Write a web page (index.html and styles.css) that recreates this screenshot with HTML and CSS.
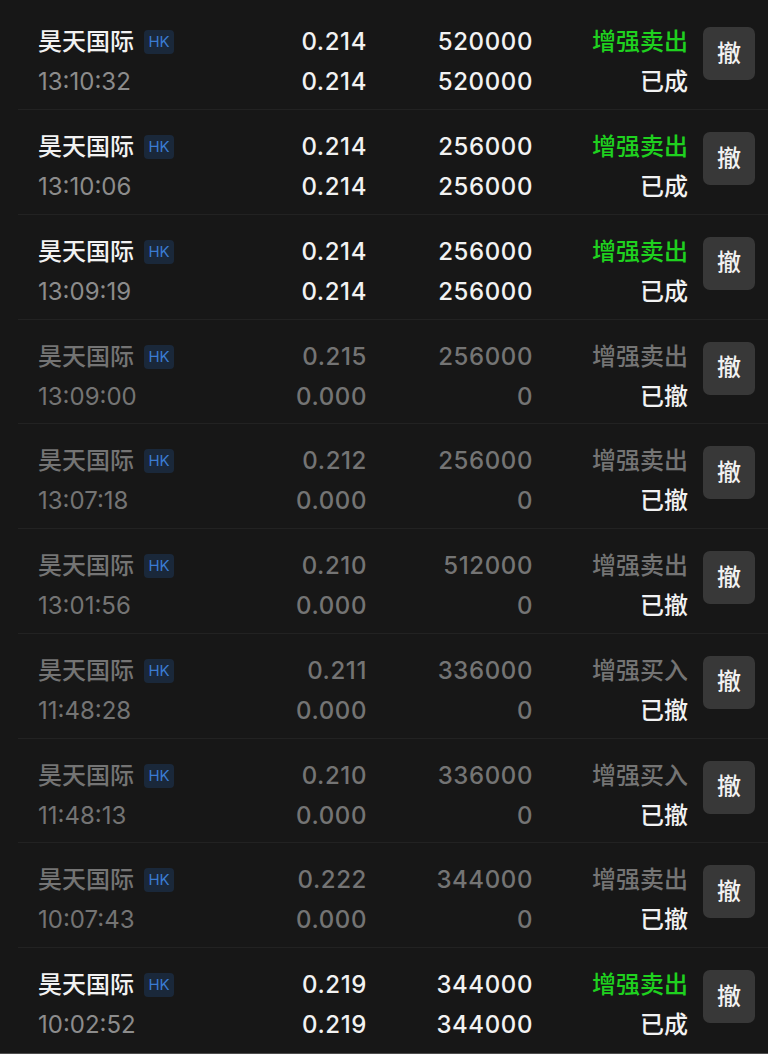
FILE: index.html
```html
<!DOCTYPE html>
<html lang="zh-CN">
<head>
<meta charset="utf-8">
<title>委托列表</title>
<link rel="stylesheet" href="styles.css">
</head>
<body>
<div class="list">
  <div class="row">
    <div class="c-left"><div class="name">昊天国际<span class="tag">HK</span></div><div class="time">13:10:32</div></div>
    <div class="c-num"><div>0.214</div><div>0.214</div></div>
    <div class="c-num"><div>520000</div><div>520000</div></div>
    <div class="c-status"><div class="green">增强卖出</div><div>已成</div></div>
    <div class="btn">撤</div>
  </div>
  <div class="row">
    <div class="c-left"><div class="name">昊天国际<span class="tag">HK</span></div><div class="time">13:10:06</div></div>
    <div class="c-num"><div>0.214</div><div>0.214</div></div>
    <div class="c-num"><div>256000</div><div>256000</div></div>
    <div class="c-status"><div class="green">增强卖出</div><div>已成</div></div>
    <div class="btn">撤</div>
  </div>
  <div class="row">
    <div class="c-left"><div class="name">昊天国际<span class="tag">HK</span></div><div class="time">13:09:19</div></div>
    <div class="c-num"><div>0.214</div><div>0.214</div></div>
    <div class="c-num"><div>256000</div><div>256000</div></div>
    <div class="c-status"><div class="green">增强卖出</div><div>已成</div></div>
    <div class="btn">撤</div>
  </div>
  <div class="row dim">
    <div class="c-left"><div class="name">昊天国际<span class="tag">HK</span></div><div class="time">13:09:00</div></div>
    <div class="c-num"><div>0.215</div><div>0.000</div></div>
    <div class="c-num"><div>256000</div><div>0</div></div>
    <div class="c-status"><div class="side">增强卖出</div><div>已撤</div></div>
    <div class="btn">撤</div>
  </div>
  <div class="row dim">
    <div class="c-left"><div class="name">昊天国际<span class="tag">HK</span></div><div class="time">13:07:18</div></div>
    <div class="c-num"><div>0.212</div><div>0.000</div></div>
    <div class="c-num"><div>256000</div><div>0</div></div>
    <div class="c-status"><div class="side">增强卖出</div><div>已撤</div></div>
    <div class="btn">撤</div>
  </div>
  <div class="row dim">
    <div class="c-left"><div class="name">昊天国际<span class="tag">HK</span></div><div class="time">13:01:56</div></div>
    <div class="c-num"><div>0.210</div><div>0.000</div></div>
    <div class="c-num"><div>512000</div><div>0</div></div>
    <div class="c-status"><div class="side">增强卖出</div><div>已撤</div></div>
    <div class="btn">撤</div>
  </div>
  <div class="row dim">
    <div class="c-left"><div class="name">昊天国际<span class="tag">HK</span></div><div class="time">11:48:28</div></div>
    <div class="c-num"><div>0.211</div><div>0.000</div></div>
    <div class="c-num"><div>336000</div><div>0</div></div>
    <div class="c-status"><div class="side">增强买入</div><div>已撤</div></div>
    <div class="btn">撤</div>
  </div>
  <div class="row dim">
    <div class="c-left"><div class="name">昊天国际<span class="tag">HK</span></div><div class="time">11:48:13</div></div>
    <div class="c-num"><div>0.210</div><div>0.000</div></div>
    <div class="c-num"><div>336000</div><div>0</div></div>
    <div class="c-status"><div class="side">增强买入</div><div>已撤</div></div>
    <div class="btn">撤</div>
  </div>
  <div class="row dim">
    <div class="c-left"><div class="name">昊天国际<span class="tag">HK</span></div><div class="time">10:07:43</div></div>
    <div class="c-num"><div>0.222</div><div>0.000</div></div>
    <div class="c-num"><div>344000</div><div>0</div></div>
    <div class="c-status"><div class="side">增强卖出</div><div>已撤</div></div>
    <div class="btn">撤</div>
  </div>
  <div class="row last">
    <div class="c-left"><div class="name">昊天国际<span class="tag">HK</span></div><div class="time">10:02:52</div></div>
    <div class="c-num"><div>0.219</div><div>0.219</div></div>
    <div class="c-num"><div>344000</div><div>344000</div></div>
    <div class="c-status"><div class="green">增强卖出</div><div>已成</div></div>
    <div class="btn">撤</div>
  </div>
</div>
<div class="footer-edge"></div>
</body>
</html>
```

FILE: styles.css
```css
html, body {
  margin: 0;
  padding: 0;
  background: #171717;
}
body {
  padding-top: 5.25px;
  font-family: Inter, "Noto Sans CJK SC", sans-serif;
  color: #f2f2f2;
  overflow: hidden;
  height: 1054px;
  box-sizing: border-box;
}
.list {
  margin-left: 18px;
}
.row {
  box-sizing: border-box;
  height: 104.75px;
  border-bottom: 1px solid #222222;
  padding: 17px 13px 0 20px;
  display: grid;
  grid-template-columns: 202px 127px 166px 155px 52px;
  align-items: start;
  font-size: 24px;
  line-height: 40px;
}
.row.last {
  border-bottom: none;
}
.c-left .name {
  display: flex;
  align-items: center;
  font-weight: 500;
  color: #f2f2f2;
}
.tag {
  display: inline-flex;
  align-items: center;
  justify-content: center;
  width: 30px;
  height: 24px;
  margin-left: 10px;
  border-radius: 4px;
  background: #1a283a;
  color: #3a7bd2;
  font-family: Inter, sans-serif;
  font-size: 15px;
  font-weight: 400;
  line-height: 24px;
}
.time {
  color: #8c8c8c;
  font-weight: 400;
}
.c-num {
  text-align: right;
  font-weight: 500;
  letter-spacing: 0.6px;
}
.c-status {
  text-align: right;
  font-weight: 500;
}
.green {
  color: #1fd11f;
}
.btn {
  margin-left: 15px;
  margin-top: 5px;
  width: 52px;
  height: 53px;
  border-radius: 7px;
  background: #383838;
  color: #f2f2f2;
  display: flex;
  align-items: center;
  justify-content: center;
  font-size: 24px;
  font-weight: 500;
  line-height: 1;
}
.row.dim .name,
.row.dim .time,
.row.dim .c-num,
.row.dim .side {
  color: #747474;
}
.row.dim .c-status div:last-child {
  color: #f2f2f2;
}
.footer-edge {
  height: 2px;
  background: #4d4d4d;
}
```
